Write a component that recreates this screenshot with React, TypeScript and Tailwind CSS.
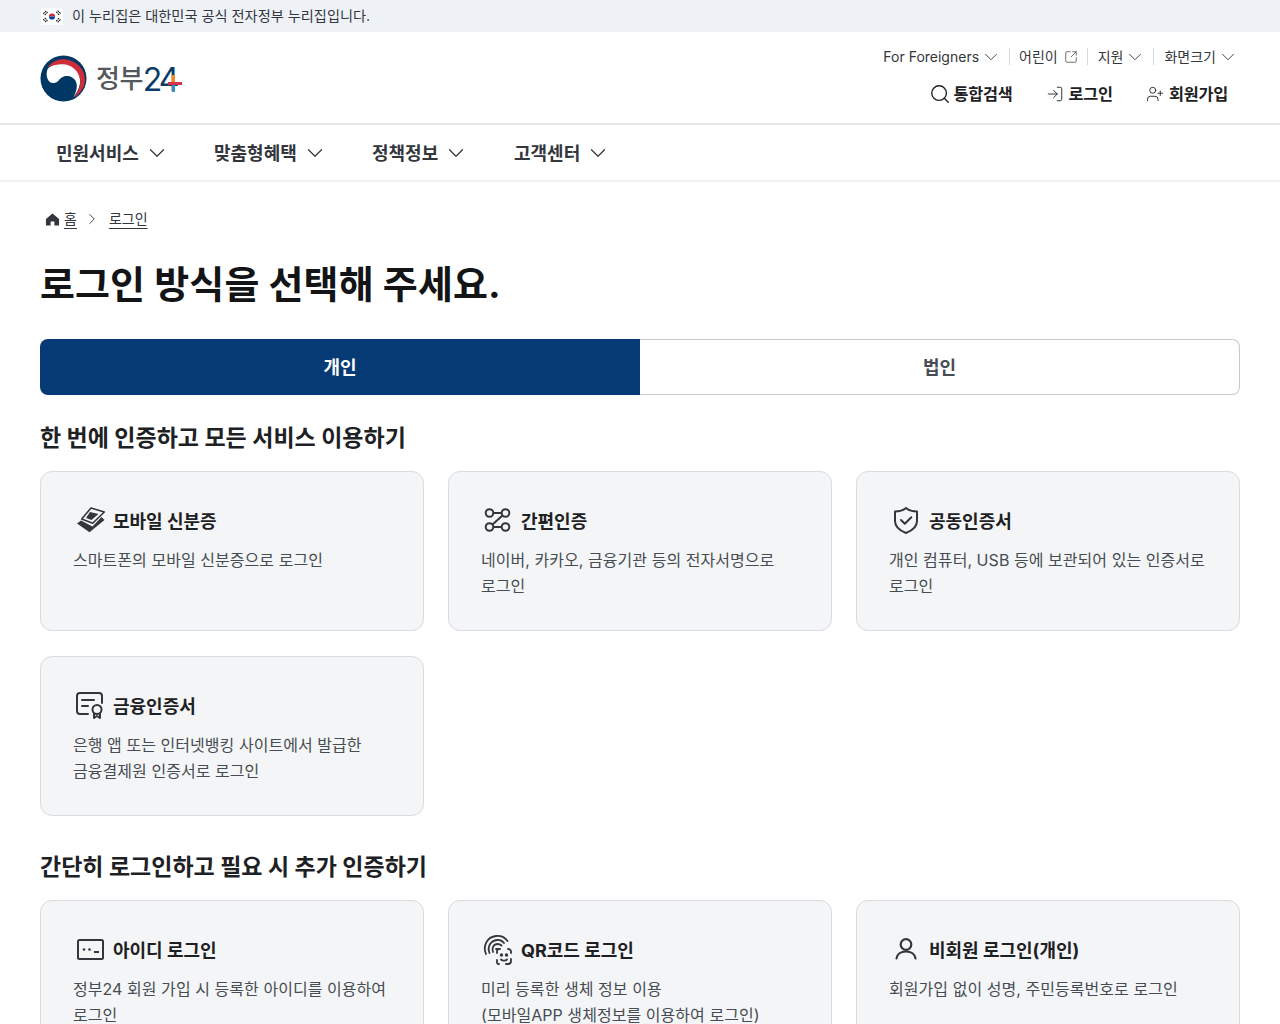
import { ChevronDown, ChevronRight, Search, LogIn, UserPlus, SquareArrowOutUpRight } from "lucide-react";
import type { ReactNode } from "react";

function Flag() {
  return (
    <svg viewBox="0 0 24 18" className="w-[22px] h-[17px]">
      <rect width="24" height="18" fill="#fff" />
      <path d="M8.600 9a3.400 3.400 0 0 1 6.800 0z" fill="#cd2e3a" />
      <path d="M8.600 9a3.400 3.400 0 0 0 6.800 0z" fill="#0047a0" />
      <g stroke="#222" strokeWidth="1.200" strokeDasharray="2 .6">
        <path d="M2.500 6 6 2.500M4 7.500 7.500 4" />
        <path d="M16.500 4 20 7.500M18 2.500 21.500 6" />
        <path d="M2.500 12 6 15.500M4 10.500 7.500 14" />
        <path d="M16.500 14 20 10.500M18 15.500 21.500 12" />
      </g>
    </svg>
  );
}

function Logo() {
  return (
    <div className="flex items-center mt-[2px]">
      <svg viewBox="0 0 48 48" className="w-[47px] h-[47px]">
        <circle cx="24" cy="24" r="23.500" fill="#003764" />
        <path d="M8 14C12 10 18 9 24 9 33 9 41 16 41 26 41 32 38.500 38 34 43 37 38 38.500 32 37 28 35.500 23.500 31 21.500 27 21.500 23 21.500 21 24 18.500 26.500 16 29 12 29.500 9.500 27 6.500 24 6 18 8 14z" fill="#fff" />
        <path d="M7.500 13C12 6 20 3.500 27 4.500 38 6 46 15 46 25 46 33 41 40 34 44 39 38 41.500 32 41 26 40 16 32 9.500 23 9.500 16 9.500 11 11 7.500 13z" fill="#cd2e3a" />
      </svg>
      <div className="ml-[9px] flex items-center leading-none">
        <span className="mt-[1px] text-[26px] font-medium text-[#55585c] tracking-[-0.5px]">정부</span>
        <span className="relative mt-[2px] text-[32px] text-[#0b3c68] font-normal tracking-[-3px]">
          24
          <span className="absolute left-[25px] top-[18px] w-[14px] h-[3px] bg-[#d8314a]" />
          <span className="absolute left-[29px] top-[11px] w-[3px] h-[7px] bg-[#ee8b2c]" />
          <span className="absolute left-[29px] top-[21px] w-[3px] h-[7px] bg-[#2f93c9]" />
        </span>
      </div>
    </div>
  );
}

function Divider() {
  return <span className="block w-px h-[17px] bg-[#d5d8dc]" />;
}

function NavItem({ label, width }: { label: string; width: string }) {
  return (
    <div className={`flex items-center ${width}`}>
      <span className="text-[18px] pt-[2px] font-bold text-[#33363d]">{label}</span>
      <ChevronDown className="w-[26px] h-[26px] ml-[5px] text-[#33363d]" strokeWidth={1.100} />
    </div>
  );
}

function UtilChevron() {
  return <ChevronDown className="w-[22px] h-[22px] ml-[1px] -mr-[5px] text-[#33363d]" strokeWidth={1} />;
}

const iconCls = "w-[32px] h-[32px] text-[#33363d]";

const IdCardStack = (
  <svg viewBox="0 0 32 32" className={iconCls}>
    <path d="M6 15.500 2 18.500 14.500 27.300 29.500 15 26.500 12 17.500 21.500z" fill="#33363d" />
    <path d="M16 3 29.300 7 17.700 18.300 6.700 14z" fill="#f4f5f6" stroke="#33363d" strokeWidth="1.600" strokeLinejoin="round" />
    <path d="M15 7 23.500 9 16.500 15 11 13z" fill="#33363d" />
  </svg>
);

const LinkedNodes = (
  <svg viewBox="0 0 32 32" className={iconCls} fill="none" stroke="#33363d" strokeWidth="2">
    <circle cx="6.500" cy="8" r="3.800" />
    <circle cx="22.500" cy="8" r="3.800" />
    <circle cx="6.500" cy="22" r="3.800" />
    <circle cx="22.500" cy="22" r="3.800" />
    <path d="M10 8h9M10 22h9M19.500 10.500 9.500 19.500" />
  </svg>
);

const ShieldCheck = (
  <svg viewBox="0 0 32 32" className={iconCls} fill="none" stroke="#33363d" strokeWidth="2" strokeLinejoin="round" strokeLinecap="round">
    <path d="M15 3c3 2.500 6.500 3.500 11 3.500v9.500c0 5.500-4.500 9.500-11 12-6.500-2.500-11-6.500-11-12V6.500C8.500 6.500 12 5.500 15 3z" />
    <path d="m10 15 3.800 3.800 6.500-6.500" />
  </svg>
);

const Certificate = (
  <svg viewBox="0 0 32 32" className={iconCls} fill="none" stroke="#33363d" strokeWidth="2" strokeLinecap="round" strokeLinejoin="round">
    <g transform="translate(-1 -1)">
      <path d="M14 25H6a3 3 0 0 1-3-3V7a3 3 0 0 1 3-3h19a3 3 0 0 1 3 3v7" />
      <path d="M8 11h12M8 17h6" />
      <circle cx="23" cy="20.500" r="4.500" />
      <path d="M20 24.500V29l3-2 3 2v-4.500" />
    </g>
  </svg>
);

const PasswordBox = (
  <svg viewBox="0 0 32 32" className={iconCls} fill="none" stroke="#33363d" strokeWidth="2">
    <rect x="3" y="6" width="25" height="19" rx="1.500" />
    <circle cx="9" cy="15.500" r="1.300" fill="#33363d" stroke="none" />
    <circle cx="14.500" cy="15.500" r="1.300" fill="#33363d" stroke="none" />
    <path d="M19 18h5" />
  </svg>
);

const BioFace = (
  <svg viewBox="0 0 32 32" className={iconCls} fill="none" stroke="#33363d" strokeWidth="1.800" strokeLinecap="round">
    <g transform="translate(-2 0)">
      <path d="M5 20C1.500 12 6 3 15 2c5-.5 9 1.500 11.500 5" />
      <path d="M8.500 19C6 13 9.500 6.500 16 6c3-.2 5.500 1 7 3" />
      <path d="M12 18c-1.500-3.500 .5-8 4.500-8 1.500 0 3 .5 4 1.500" />
      <path d="M17 15h-2" />
      <path d="M16 19v-2a2 2 0 0 1 2-2h1M27 15a3 3 0 0 1 3 2v2M30 25v2a3 3 0 0 1-3 3h-2M18 30h-1a2 2 0 0 1-1-2v-2" />
      <circle cx="20.500" cy="21" r=".8" fill="#33363d" />
      <circle cx="25.500" cy="21" r=".8" fill="#33363d" />
      <path d="M20 25.500c1.500 1.500 4.500 1.500 6 0" />
    </g>
  </svg>
);

const Person = (
  <svg viewBox="0 0 32 32" className={iconCls} fill="none" stroke="#33363d" strokeWidth="2.200" strokeLinecap="round">
    <circle cx="15" cy="10.500" r="5.300" />
    <path d="M5.500 24.500c.5-4.500 4.500-7 9.500-7s9 2.500 9.500 7" />
  </svg>
);

function LoginCard({ icon, title, desc }: { icon: ReactNode; title: string; desc: ReactNode }) {
  return (
    <div className="h-[160px] rounded-[12px] border border-[#d8dbe0] bg-[#f4f5f6] pt-[32px] pb-[24px] px-[32px]">
      <div className="flex items-center h-[34px] gap-[6px]">
        <span className="flex w-[33px] justify-center ml-[1px]">{icon}</span>
        <span className="text-[18px] font-bold text-[#1e2124]">{title}</span>
      </div>
      <p className="mt-[9px] text-[16px] leading-[26px] tracking-[0.05px] text-[#464c53]">{desc}</p>
    </div>
  );
}

function SectionTitle({ children }: { children: ReactNode }) {
  return <h2 className="text-[23px] leading-[36px] font-bold text-[#1e2124]">{children}</h2>;
}

export default function App() {
  return (
    <div className="h-[1024px] overflow-hidden bg-white font-['Inter','Noto_Sans_CJK_KR',sans-serif]">
      <div className="h-[32px] bg-[#eef2f7]">
        <div className="flex items-center h-full px-[41px] gap-[9px] text-[14.200px] text-[#33363d]">
          <Flag />
          <span>이 누리집은 대한민국 공식 전자정부 누리집입니다.</span>
        </div>
      </div>

      <header className="h-[93px] border-b-2 border-[#e6e8ea] px-[40px] flex justify-between items-center">
        <Logo />
        <div className="flex flex-col items-end pr-[6px] gap-[14px] -mt-[3px]">
          <div className="flex items-center h-[22px] text-[14px] text-[#33363d]">
            <span>For Foreigners</span>
            <UtilChevron />
            <span className="ml-[12px] mr-[9px]"><Divider /></span>
            <span>어린이</span>
            <SquareArrowOutUpRight className="w-[14px] h-[14px] ml-[6px] text-[#555]" strokeWidth={1.400} />
            <span className="ml-[9px] mr-[10px]"><Divider /></span>
            <span>지원</span>
            <UtilChevron />
            <span className="ml-[12px] mr-[10px]"><Divider /></span>
            <span>화면크기</span>
            <UtilChevron />
          </div>
          <div className="flex items-center text-[16.300px] font-bold text-[#1e2124] pr-[6px] tracking-[-0.2px]">
            <Search className="w-[22px] h-[22px] mr-[2px]" strokeWidth={1.500} />
            <span>통합검색</span>
            <LogIn className="w-[18px] h-[18px] ml-[33px] mr-[5px]" strokeWidth={1.200} />
            <span>로그인</span>
            <UserPlus className="w-[18px] h-[18px] ml-[33px] mr-[5px]" strokeWidth={1.200} />
            <span>회원가입</span>
          </div>
        </div>
      </header>

      <nav className="h-[57px] border-b-2 border-[#f0f1f2] flex items-center pl-[56px]">
        <NavItem label="민원서비스" width="w-[158px]" />
        <NavItem label="맞춤형혜택" width="w-[158px]" />
        <NavItem label="정책정보" width="w-[142px]" />
        <NavItem label="고객센터" width="w-auto" />
      </nav>

      <main className="px-[40px]">
        <div className="flex items-center pt-[26px] text-[14px] text-[#33363d] leading-[22px]">
          <svg viewBox="0 0 16 16" className="w-[15px] h-[15px] ml-[5px] mr-[4px]">
            <path d="M8 1.500 1 7.500V14.500H6V10H10V14.500H15V7.500z" fill="#33363d" />
          </svg>
          <span className="underline underline-offset-4">홈</span>
          <ChevronRight className="w-[18px] h-[18px] ml-[6px] mr-[8px]" strokeWidth={1.200} />
          <span className="underline underline-offset-4">로그인</span>
        </div>

        <h1 className="mt-[24px] text-[38px] leading-[60px] font-bold text-[#131416] tracking-[0.1px]">로그인 방식을 선택해 주세요.</h1>

        <div className="mt-[25px] flex h-[56px] text-[18px] font-bold">
          <div className="w-1/2 pt-[1px] rounded-l-[8px] bg-[#063a74] text-white flex items-center justify-center">개인</div>
          <div className="w-1/2 pt-[1px] rounded-r-[8px] border border-l-0 border-[#c6c9ce] text-[#464c53] flex items-center justify-center">법인</div>
        </div>

        <div className="mt-[25px]">
          <SectionTitle>한 번에 인증하고 모든 서비스 이용하기</SectionTitle>
        </div>
        <div className="mt-[15px] grid grid-cols-3 gap-x-[24px] gap-y-[25px]">
          <LoginCard icon={IdCardStack} title="모바일 신분증" desc="스마트폰의 모바일 신분증으로 로그인" />
          <LoginCard icon={LinkedNodes} title="간편인증" desc={<>네이버, 카카오, 금융기관 등의 전자서명으로<br />로그인</>} />
          <LoginCard icon={ShieldCheck} title="공동인증서" desc={<>개인 컴퓨터, USB 등에 보관되어 있는 인증서로<br />로그인</>} />
          <LoginCard icon={Certificate} title="금융인증서" desc={<>은행 앱 또는 인터넷뱅킹 사이트에서 발급한<br />금융결제원 인증서로 로그인</>} />
        </div>

        <div className="mt-[33px]">
          <SectionTitle>간단히 로그인하고 필요 시 추가 인증하기</SectionTitle>
        </div>
        <div className="mt-[15px] grid grid-cols-3 gap-x-[24px]">
          <LoginCard icon={PasswordBox} title="아이디 로그인" desc={<>정부24 회원 가입 시 등록한 아이디를 이용하여<br />로그인</>} />
          <LoginCard icon={BioFace} title="QR코드 로그인" desc={<>미리 등록한 생체 정보 이용<br />(모바일APP 생체정보를 이용하여 로그인)</>} />
          <LoginCard icon={Person} title="비회원 로그인(개인)" desc="회원가입 없이 성명, 주민등록번호로 로그인" />
        </div>
      </main>
    </div>
  );
}
